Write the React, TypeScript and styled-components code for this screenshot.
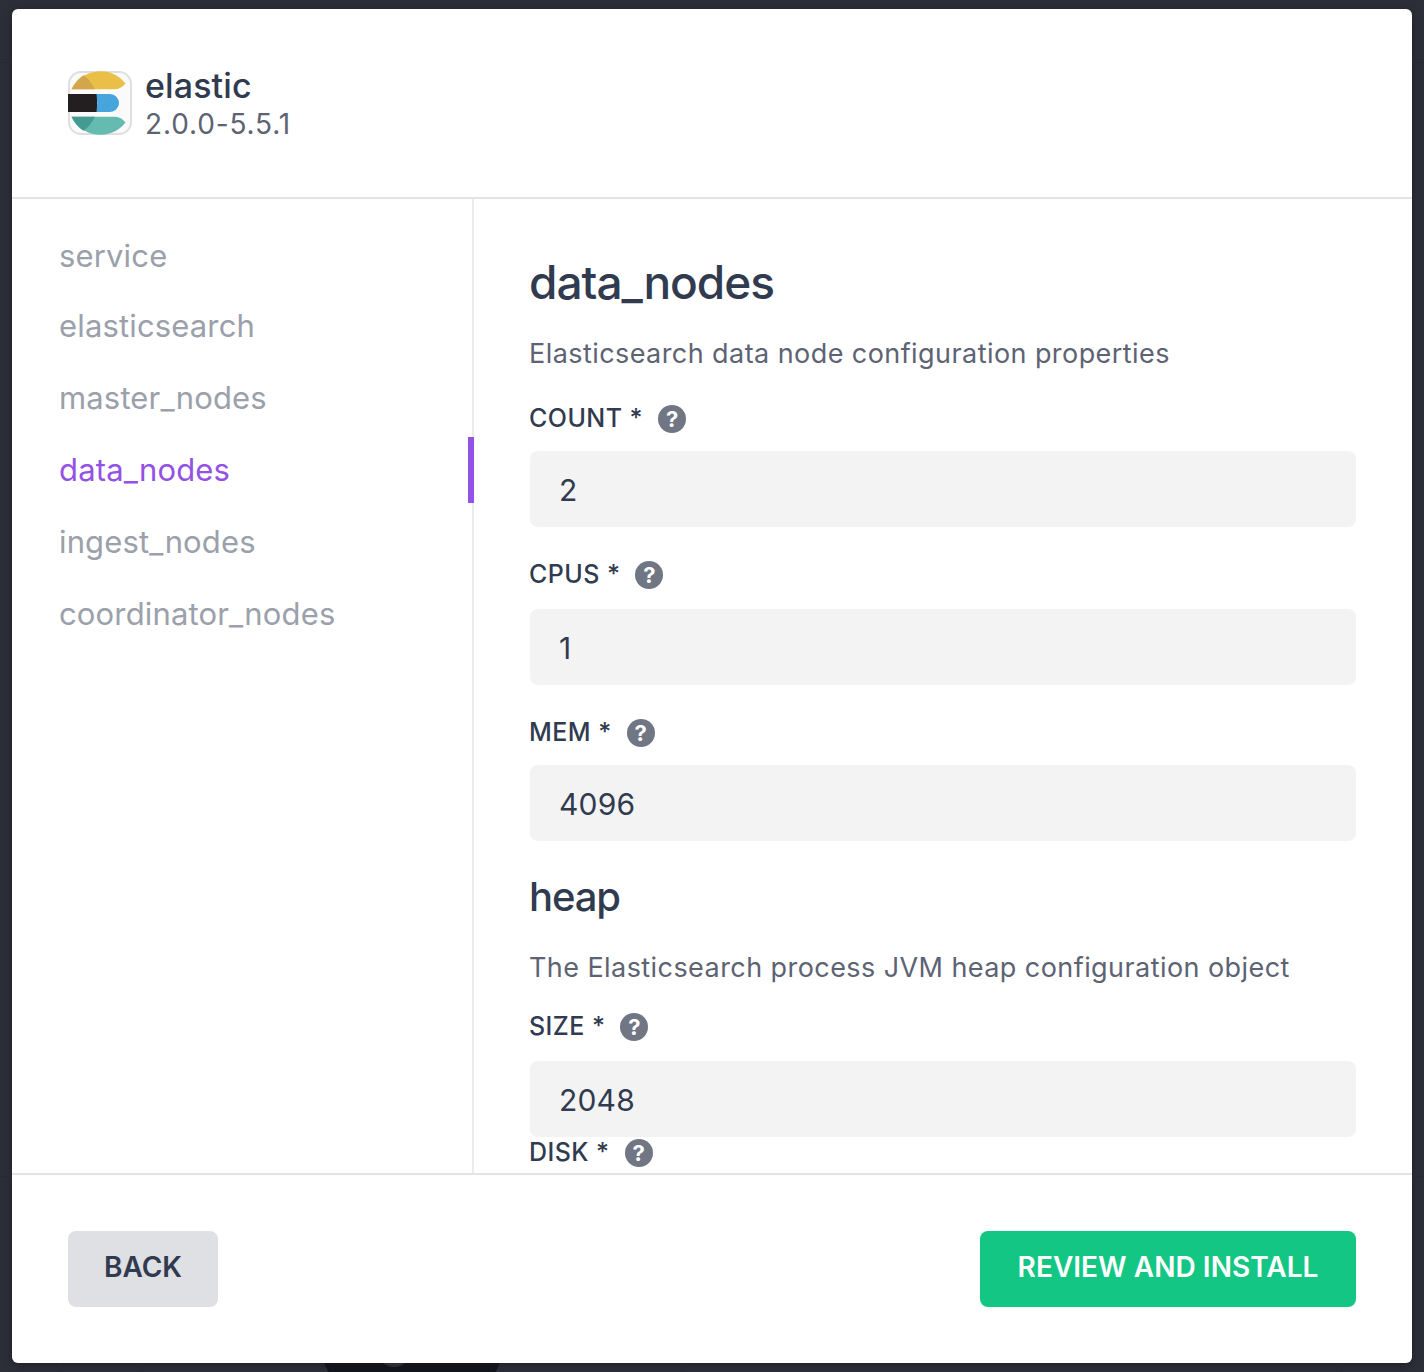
import React from "react";
import styled, { createGlobalStyle } from "styled-components";

const colors = {
  ink: "#313b50",
  body: "#5d6373",
  muted: "#9ba0ab",
  purple: "#9351e5",
  green: "#14c684",
  line: "#e4e4e5",
  field: "#f3f3f3",
};

const GlobalStyle = createGlobalStyle`
  * { box-sizing: border-box; }
  body {
    margin: 0;
    background: #2c2f38;
    font-family: Inter, "Liberation Sans", sans-serif;
    color: ${colors.ink};
  }
  h1, h2, h3, p { margin: 0; }
`;

const Backdrop = styled.div`
  position: relative;
  height: 1372px;
  padding: 9px 12px;
  overflow: hidden;
  background: #2c2f38;
`;

const Shade = styled.svg`
  position: absolute;
  left: 0;
  top: 0;
`;

const Modal = styled.main`
  position: relative;
  display: flex;
  flex-direction: column;
  height: 1354px;
  overflow: hidden;
  border-radius: 6px;
  background: #fff;
`;

const ModalShadow = styled.div`
  border-radius: 6px;
  box-shadow: 0 2px 10px rgba(0, 0, 0, 0.35);
`;

const Header = styled.header`
  display: flex;
  flex: none;
  height: 190px;
  padding: 57px 56px 0;
  gap: 13px;
  border-bottom: 2px solid ${colors.line};
`;

const Logo = styled.svg`
  flex: none;
  margin-top: 5px;
`;

const PackageName = styled.h1`
  font-size: 34px;
  font-weight: 500;
  line-height: 40px;
  letter-spacing: 0.1px;
`;

const PackageVersion = styled.p`
  color: ${colors.body};
  font-size: 28px;
  line-height: 36px;
  letter-spacing: 0.85px;
`;

const Body = styled.div`
  display: flex;
  flex: 1;
  min-height: 0;
`;

const Sidebar = styled.nav`
  display: flex;
  flex: none;
  flex-direction: column;
  gap: 6px;
  width: 462px;
  padding: 24px 0 0 47px;
  border-right: 2px solid #ebebec;
`;

const NavItem = styled.a<{ $active?: boolean }>`
  height: 66px;
  margin-right: -2px;
  border-right: 6px solid ${(p) => (p.$active ? colors.purple : "transparent")};
  color: ${(p) => (p.$active ? colors.purple : colors.muted)};
  font-size: 31px;
  line-height: 66px;
  letter-spacing: 0.15px;

  &:first-child {
    margin-bottom: -2px;
  }
`;

const Content = styled.section`
  flex: 1;
  min-width: 0;
  padding: 55px 56px 0 55px;
  overflow: hidden;
`;

const Title = styled.h2`
  margin-bottom: 26px;
  font-size: 46px;
  font-weight: 500;
  line-height: 56px;
  letter-spacing: -1px;
`;

const Subtitle = styled.h3`
  margin: 28px 0 25px;
  font-size: 40px;
  font-weight: 500;
  line-height: 56px;
  letter-spacing: -1.1px;
`;

const Description = styled.p`
  color: ${colors.body};
  font-size: 27px;
  line-height: 36px;
  letter-spacing: 0.43px;
  white-space: nowrap;
`;

const Label = styled.label<{ $top: number }>`
  display: flex;
  align-items: center;
  gap: 15px;
  height: 32px;
  margin-top: ${(p) => p.$top}px;
  font-size: 25px;
  font-weight: 500;
  line-height: 32px;
  letter-spacing: 0.45px;
`;

const Field = styled.input<{ $top: number }>`
  display: block;
  width: 826px;
  height: 76px;
  margin: ${(p) => p.$top}px 0 0 1px;
  padding: 2px 29px 0;
  border: 0;
  border-radius: 8px;
  outline: 0;
  background: ${colors.field};
  color: ${colors.ink};
  font: 400 30px Inter, "Liberation Sans", sans-serif;
  letter-spacing: 0.2px;
`;

const HelpBadge = styled.span`
  display: grid;
  place-items: center;
  width: 28px;
  height: 28px;
  margin-top: 2px;
  border-radius: 50%;
  background: #717685;
  color: #fff;
  font-size: 22px;
  font-weight: 700;
  line-height: 28px;
  letter-spacing: 0;
`;

const Footer = styled.footer`
  display: flex;
  flex: none;
  align-items: flex-start;
  justify-content: space-between;
  height: 190px;
  padding: 56px;
  border-top: 2px solid ${colors.line};
`;

const Button = styled.button<{ $primary?: boolean }>`
  width: ${(p) => (p.$primary ? 376 : 150)}px;
  height: 76px;
  padding: 0 0 4px;
  border: 0;
  border-radius: 8px;
  background: ${(p) => (p.$primary ? colors.green : "#dfe0e4")};
  color: ${(p) => (p.$primary ? "#fff" : colors.ink)};
  font: 600 28px Inter, "Liberation Sans", sans-serif;
  letter-spacing: 0.04px;
  white-space: nowrap;
`;

const sections = ["service", "elasticsearch", "master_nodes", "data_nodes", "ingest_nodes", "coordinator_nodes"];

function ElasticLogo() {
  return (
    <Logo width="64" height="64" viewBox="0 0 64 64" aria-label="elastic">
      <defs>
        <clipPath id="tile"><rect width="64" height="64" rx="13" /></clipPath>
      </defs>
      <rect x="1" y="1" width="62" height="62" rx="12" fill="#fafafa" stroke="#dfdfdf" strokeWidth="2" />
      <g clipPath="url(#tile)">
        <path d="M3.5 18.3A32 32 0 0 1 57.5 12.5C54.5 16.4 51 18.3 46 18.3Z" fill="#eabf48" />
        <path d="M3.5 18.3C6.5 12 10.5 7.5 15.5 4.2Q22.5 9 26.8 18.3Z" fill="#d2a64a" />
        <path d="M0 23H29V41H0Z" fill="#231f20" />
        <path d="M28.5 23H42A9 9 0 0 1 42 41H28.5Q30 32 28.5 23Z" fill="#47a4dc" />
        <path d="M3.5 45.7H46C51 45.7 54.5 47.6 57.5 51.5A32 32 0 0 1 3.5 45.7Z" fill="#65bbb0" />
        <path d="M3.5 45.7H26.8Q22.5 55 15.5 59.8C10.5 56.5 6.5 52 3.5 45.7Z" fill="#449b92" />
      </g>
    </Logo>
  );
}

interface SettingProps {
  name: string;
  value?: string;
  top: number;
  fieldTop?: number;
}

function Setting({ name, value, top, fieldTop = 17 }: SettingProps) {
  return (
    <>
      <Label $top={top}>
        {name} *<HelpBadge>?</HelpBadge>
      </Label>
      {value && <Field $top={fieldTop} defaultValue={value} />}
    </>
  );
}

export default function App() {
  return (
    <>
      <GlobalStyle />
      <Backdrop>
        <Shade width="1424" height="1372">
          <path d="M0 62.5H12M1412 62.5H1424M0 1176.5H12M1412 1176.5H1424M59.5 1363V1372M142.5 1363V1372M681.5 1363V1372M1341.5 1363V1372" stroke="#272a32" />
          <path d="M324 1360H500Q499 1368 494 1374H330Q325 1368 324 1360Z" fill="#11141b" />
          <ellipse cx="394" cy="1359" rx="12" ry="8" fill="#2c2f35" />
        </Shade>
        <ModalShadow>
          <Modal>
            <Header>
              <ElasticLogo />
              <div>
                <PackageName>elastic</PackageName>
                <PackageVersion>2.0.0-5.5.1</PackageVersion>
              </div>
            </Header>
            <Body>
              <Sidebar>
                {sections.map((name) => (
                  <NavItem key={name} $active={name === "data_nodes"}>{name}</NavItem>
                ))}
              </Sidebar>
              <Content>
                <Title>data_nodes</Title>
                <Description>Elasticsearch data node configuration properties</Description>
                <Setting name="COUNT" value="2" top={30} />
                <Setting name="CPUS" value="1" top={31} fieldTop={19} />
                <Setting name="MEM" value="4096" top={31} />
                <Subtitle>heap</Subtitle>
                <Description>The Elasticsearch process JVM heap configuration object</Description>
                <Setting name="SIZE" value="2048" top={24} fieldTop={19} />
                <Setting name="DISK" top={-1} />
              </Content>
            </Body>
            <Footer>
              <Button>BACK</Button>
              <Button $primary>REVIEW AND INSTALL</Button>
            </Footer>
          </Modal>
        </ModalShadow>
      </Backdrop>
    </>
  );
}
